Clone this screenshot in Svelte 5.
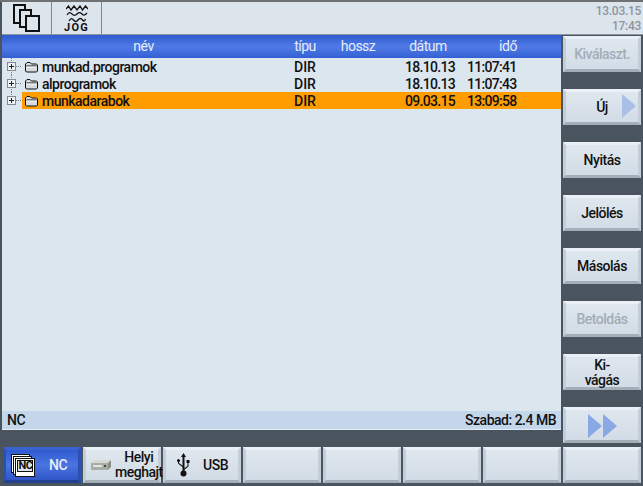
<script>
	const files = [
		{ name: 'munkad.programok', type: 'DIR', date: '18.10.13', time: '11:07:41' },
		{ name: 'alprogramok', type: 'DIR', date: '18.10.13', time: '11:07:43' },
		{ name: 'munkadarabok', type: 'DIR', date: '09.03.15', time: '13:09:58', selected: true }
	];
	const sideKeys = [
		{ label: 'Kiválaszt.', disabled: true },
		{ label: 'Új', arrow: true },
		{ label: 'Nyitás' },
		{ label: 'Jelölés' },
		{ label: 'Másolás' },
		{ label: 'Betoldás', disabled: true },
		{ label: 'Ki-\nvágás' },
		{ label: '', more: true }
	];
</script>

{#snippet folder()}
	<svg class="folder" width="13" height="12" viewBox="0 0 13 12">
		<path d="M.5 10V3l1.500-1.500h3L6.500 3H11.500l1 1v6l-1 1h-10z" fill="#d6dbdc" stroke="#111" />
		<path d="M1.500 5H11.500" stroke="#111" />
		<path d="M1.500 6H11.500" stroke="#fff" />
	</svg>
{/snippet}

<div class="screen">
	<header class="top">
		<div class="cell pages">
			<svg width="27" height="28" viewBox="0 0 27 28" fill="none" stroke="#111" stroke-width="2">
				<path d="M8 19H1V1h11v6" />
				<path d="M14 23H7V6h11v6" />
				<rect x="13" y="12" width="13" height="15" fill="#dce4ec" />
			</svg>
		</div>
		<div class="cell jog">
			<svg width="22" height="18" viewBox="0 0 22 18" fill="none" stroke="#111" stroke-width="1.300">
				<path d="M0 4l2.500-3 2.500 4 3-4 3 4 3-4 2.500 4 3-4 2.500 3" />
				<path d="M1 10c2-3 3-3 5-1s3 2 5 0 3-2 5 0 3 1 5-1" />
				<path d="M3 16c2-3 3-3 4.500-1s3 2 4.500 0 3-2 4.500 0 2 1 3-1" />
			</svg>
			<span>JOG</span>
		</div>
		<div class="clock">13.03.15<br />17:43</div>
	</header>

	<div class="middle">
		<main class="browser">
			<div class="head row">
				<span class="c-name">név</span>
				<span class="c-type">típu</span>
				<span class="c-size">hossz</span>
				<span class="c-date">dátum</span>
				<span class="c-time">idő</span>
			</div>
			<div class="list">
				{#each files as file, i}
					<div class="item">
						<span class="tree" class:end={i === files.length - 1}><span class="plus"></span></span>
						<div class="row entry" class:selected={file.selected}>
							<span class="file-name">{@render folder()}{file.name}</span>
							<span class="c-type val">{file.type}</span>
							<span class="c-size"></span>
							<span class="c-date val">{file.date}</span>
							<span class="c-time val">{file.time}</span>
						</div>
					</div>
				{/each}
			</div>
			<div class="status"><span>NC</span><span>Szabad: 2.4 MB</span></div>
		</main>

		<aside class="side">
			{#each sideKeys as key}
				<button class="key" class:disabled={key.disabled}>
					{#if key.more}
						<svg width="29" height="24" viewBox="0 0 29 24" fill="#8aa8e4">
							<path d="M0 0l14 12L0 24zM15 0l14 12-14 12z" />
						</svg>
					{:else}
						<span class="label">{key.label}</span>
					{/if}
					{#if key.arrow}
						<svg class="arrow" width="14" height="24" viewBox="0 0 14 24" fill="#a9bfe8">
							<path d="M0 0l14 12L0 24z" />
						</svg>
					{/if}
				</button>
			{/each}
		</aside>
	</div>

	<footer class="bottom">
		<button class="key wide active">
			<span class="nc-icon">
				<svg width="24" height="23" viewBox="0 0 24 23">
					<rect x="0.500" y="0.500" width="18" height="18" fill="#fff" stroke="#111" />
					<rect x="2.500" y="2.500" width="18" height="18" fill="#fff" stroke="#111" />
					<rect x="4.500" y="4.500" width="19" height="18" fill="#fff" stroke="#111" />
					<rect x="6.500" y="6.500" width="15" height="11" fill="#dce4ec" stroke="#111" />
				</svg>
				<span class="nc-tag">NC</span>
			</span>
			<span class="grow">NC</span>
		</button>
		<button class="key wide">
			<svg class="drive" width="20" height="10" viewBox="0 0 20 10">
				<path d="M0 3l3-3h17l-3 3z" fill="#d5d9d2" />
				<path d="M0 3h17v7H0z" fill="#a8aca6" />
				<path d="M17 3l3-3v7l-3 3z" fill="#8a8e88" />
				<rect x="2" y="5" width="9" height="2" fill="#e2e4de" />
				<rect x="13" y="5" width="2" height="2" fill="#445" />
			</svg>
			<span class="grow small">Helyi<br />meghajt</span>
		</button>
		<button class="key wide">
			<svg class="usb" width="13" height="24" viewBox="0 0 13 24" fill="#111">
				<path d="M6.500 0l2.500 4H7.500v14h-2V4H4z" />
				<circle cx="6.500" cy="20.500" r="3" />
				<path d="M7 15.500l3.500-2.500V10H9.500V7h3v3h-1v3.500l-4.500 3.500z" />
				<path d="M6 13L2 10V9a1.500 1.500 0 1 0-1 0v1.500l5 4z" />
			</svg>
			<span class="grow">USB</span>
		</button>
		<button class="key wide"></button>
		<button class="key wide"></button>
		<button class="key wide"></button>
		<button class="key wide"></button>
		<button class="key wide"></button>
	</footer>
</div>

<style>
	:global(body) {
		margin: 0;
	}

	.screen {
		width: 643px;
		height: 486px;
		display: flex;
		flex-direction: column;
		box-sizing: border-box;
		background: #4a545e;
		border-top: 2px solid #6f7173;
		font-family: Roboto, "Liberation Sans", sans-serif;
		font-size: 14px;
		font-weight: 500;
		letter-spacing: -0.5px;
		color: #111;
		overflow: hidden;
	}

	.top {
		height: 33px;
		flex: none;
		margin-left: 2px;
		display: flex;
		background: #dce4ec;
		border-bottom: 1px solid #8b97a3;
		box-sizing: border-box;
	}

	.cell {
		box-sizing: border-box;
		height: 32px;
		border-right: 1px solid #7d8894;
		display: flex;
		flex-direction: column;
		align-items: center;
		justify-content: center;
		width: 50px;
	}

	.jog {
		justify-content: flex-start;
		padding-top: 3px;
		line-height: 10px;
		font-size: 11px;
		font-weight: 700;
		letter-spacing: 1.2px;
	}

	.clock {
		margin-left: auto;
		padding: 2px 2px 0 0;
		text-align: right;
		font-size: 12px;
		line-height: 15px;
		letter-spacing: -0.3px;
		color: #8d959e;
	}

	.middle {
		flex: 1;
		display: flex;
		min-height: 0;
	}

	.browser {
		width: 559px;
		margin-left: 2px;
		height: 395px;
		display: flex;
		flex-direction: column;
		background: #dce6ef;
		flex: none;
	}

	.row {
		display: flex;
		height: 17px;
		line-height: 17px;
		align-items: center;
	}

	.head {
		height: 23px;
		flex: none;
		background: linear-gradient(#2f5bd0, #4f7ae6 50%, #3560d4);
		color: #e6eefb;
		text-align: center;
		font-weight: 400;
		box-sizing: border-box;
		line-height: 23px;
	}

	.c-name {
		width: 283px;
	}

	.c-type {
		width: 40px;
		text-align: center;
		box-sizing: border-box;
	}

	.c-size {
		width: 66px;
		text-align: center;
	}

	.c-date {
		width: 74px;
		text-align: center;
		box-sizing: border-box;
	}

	.c-time {
		width: 86px;
		text-align: center;
		box-sizing: border-box;
	}

	.val {
		text-align: left;
		letter-spacing: -0.7px;
	}

	.val.c-type {
		padding-left: 9px;
		letter-spacing: 0;
	}

	.val.c-date {
		padding-left: 14px;
	}

	.val.c-time {
		padding-left: 2px;
	}

	.list {
		flex: 1;
	}

	.item {
		display: flex;
		height: 17px;
	}

	.tree {
		width: 20px;
		flex: none;
		display: flex;
		align-items: center;
		padding-left: 5px;
		box-sizing: border-box;
		background:
			repeating-linear-gradient(#77818c 0 1px, transparent 1px 2px) 9px 0 / 1px 100% no-repeat,
			repeating-linear-gradient(90deg, #77818c 0 1px, transparent 1px 2px) 14px 8px / 6px 1px no-repeat;
	}

	.tree.end {
		background:
			repeating-linear-gradient(#77818c 0 1px, transparent 1px 2px) 9px 0 / 1px 8px no-repeat,
			repeating-linear-gradient(90deg, #77818c 0 1px, transparent 1px 2px) 14px 8px / 6px 1px no-repeat;
	}

	.plus {
		width: 9px;
		height: 9px;
		box-sizing: border-box;
		border: 1px solid #7f8a96;
		background:
			linear-gradient(#222, #222) center / 5px 1px no-repeat,
			linear-gradient(#222, #222) center / 1px 5px no-repeat,
			#eef2f6;
	}

	.entry {
		flex: 1;
		padding-top: 1px;
		box-sizing: border-box;
	}

	.selected {
		background: #ff9c00;
	}

	.file-name {
		width: 263px;
		display: flex;
		align-items: center;
		gap: 4px;
		padding-left: 3px;
		box-sizing: border-box;
	}

	.folder {
		flex: none;
	}

	.status {
		height: 18px;
		flex: none;
		display: flex;
		justify-content: space-between;
		align-items: center;
		padding: 0 5px;
		background: #c3d6ea;
		border-bottom: 1px solid #e4edf5;
	}

	.side {
		width: 80px;
		flex: none;
		display: flex;
		flex-direction: column;
		gap: 17px;
		padding: 1px 0 0 2px;
		box-sizing: border-box;
	}

	.key {
		box-sizing: border-box;
		width: 78px;
		height: 36px;
		flex: none;
		padding: 1px 0 0;
		position: relative;
		display: flex;
		align-items: center;
		justify-content: center;
		font: inherit;
		letter-spacing: inherit;
		color: inherit;
		background: linear-gradient(#dfe7ee, #d2dce6);
		border: 3px solid;
		border-color: #eaf0f5 #c4ced8 #a3aeb9 #c4ced8;
	}

	.disabled {
		color: #a3adb8;
	}

	.label {
		white-space: pre-line;
		line-height: 15px;
		text-align: center;
	}

	.arrow {
		position: absolute;
		right: 2px;
		top: 2px;
	}

	.bottom {
		height: 39px;
		flex: none;
		display: flex;
		gap: 2px;
		padding: 0 0 3px 3px;
		box-sizing: border-box;
	}

	.wide {
		padding: 0 1px 0 5px;
		justify-content: flex-start;
		gap: 4px;
	}

	.active {
		background: linear-gradient(#2f5bd0, #4a74e2 50%, #3056c8);
		border-color: #3a62d0 #2c4fb0 #24408f #2c4fb0;
		color: #e6eefb;
	}

	.nc-icon {
		position: relative;
		display: flex;
		flex: none;
	}

	.nc-tag {
		position: absolute;
		left: 7px;
		top: 6px;
		width: 15px;
		font-size: 11px;
		font-weight: 700;
		line-height: 12px;
		text-align: center;
		letter-spacing: -0.5px;
		color: #111;
	}

	.drive,
	.usb {
		flex: none;
	}

	.usb {
		margin-left: 6px;
	}

	.grow {
		flex: 1;
		text-align: center;
	}

	.small {
		line-height: 15px;
	}
</style>
